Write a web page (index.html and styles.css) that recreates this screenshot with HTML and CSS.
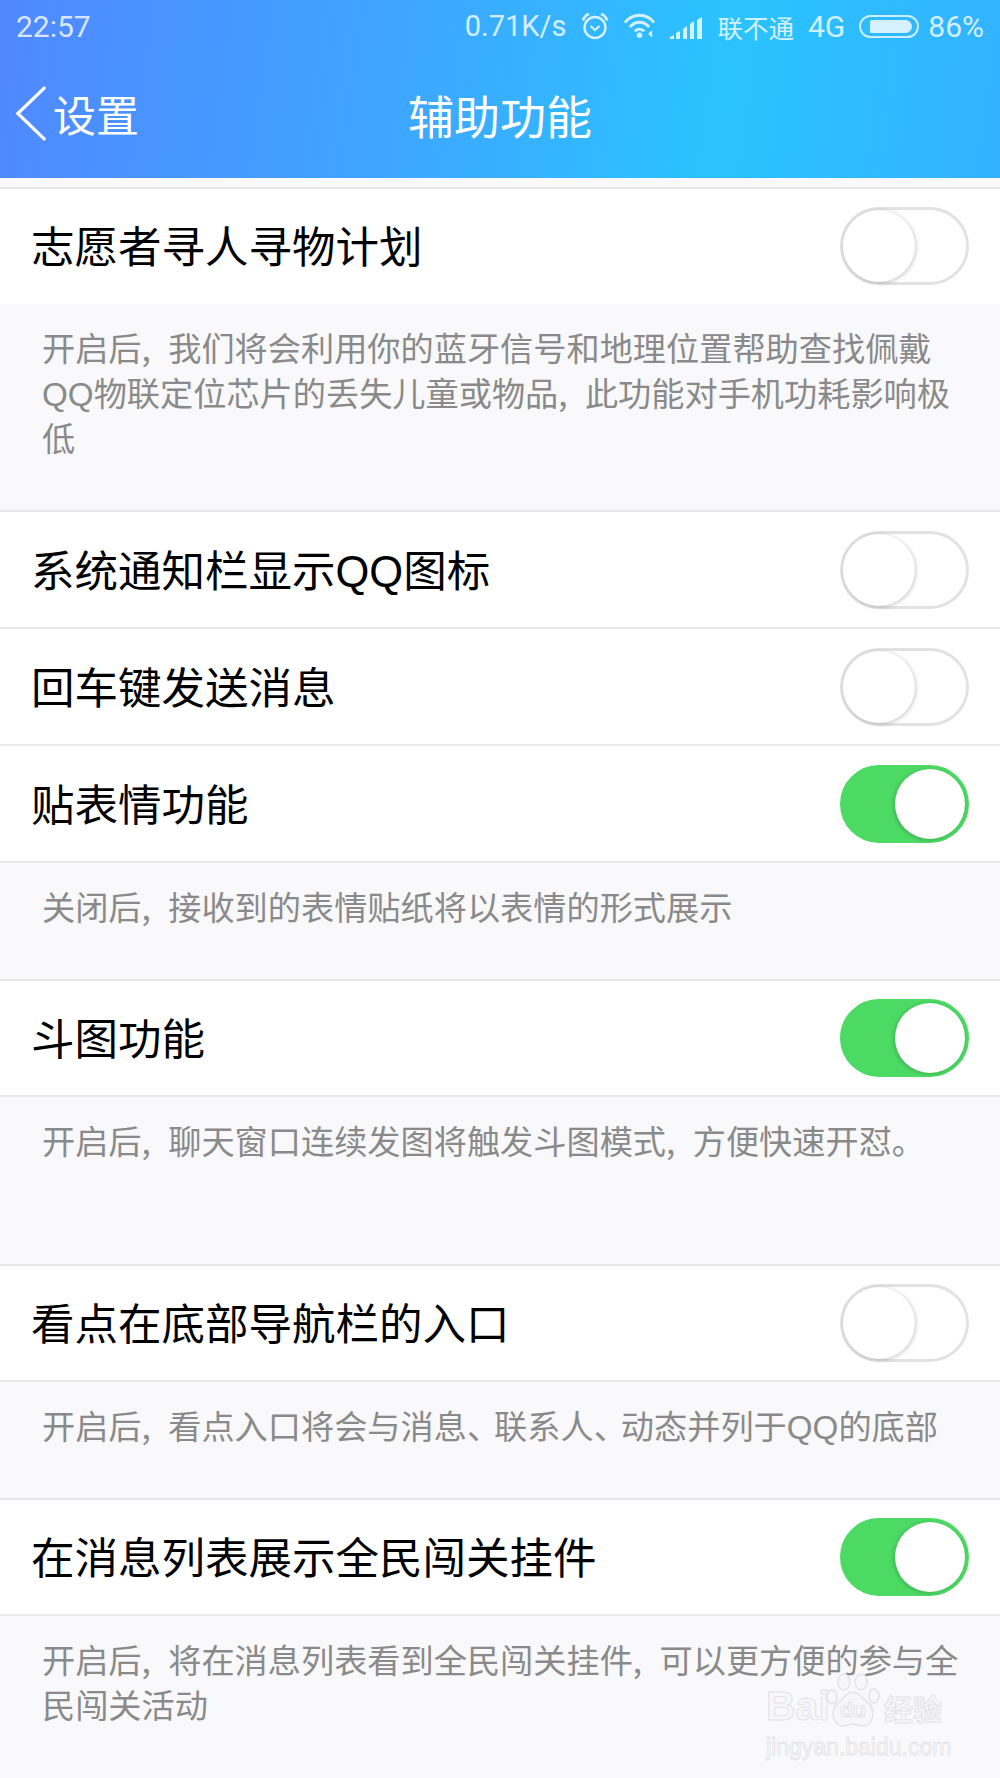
FILE: index.html
```html
<!DOCTYPE html>
<html lang="zh-CN">
<head>
  <meta charset="UTF-8" />
  <meta name="viewport" content="width=device-width, initial-scale=1.0" />
  <title>辅助功能</title>
  <link rel="stylesheet" href="styles.css">
</head>
<body>
  <div class="phone">
    <header class="header">
      <div class="statusbar">
        <span class="time">22:57</span>
        <div class="status-right">
          <span>0.71K/s</span>
          <svg class="ic-alarm" width="28" height="28" viewBox="0 0 28 28" fill="none" stroke="currentColor">
            <circle cx="14" cy="15.5" r="10.5" stroke-width="2.4"/>
            <path d="M9.5 14l4.5 4 4.5-4" stroke-width="2.2"/>
            <path d="M2 8.5C3 5 5 3 8 2M26 8.5C25 5 23 3 20 2" stroke-width="2.6"/>
          </svg>
          <svg class="ic-wifi" width="33" height="26" viewBox="0 0 34 26" fill="none" stroke="currentColor" stroke-width="3">
            <path d="M2 9.5C10-.5 24-.5 32 9.5"/>
            <path d="M7 14c6-6.500 14-6.500 20 0"/>
            <path d="M12 18.500c3-3 7-3 10 0"/>
            <circle cx="17" cy="22.500" r="2.800" fill="currentColor" stroke="none"/>
            <path d="M30 17v8l-4-4z" fill="currentColor" stroke="none"/>
          </svg>
          <svg class="ic-signal" width="32" height="22" viewBox="0 0 32 22" fill="currentColor">
            <path d="M0 22v-2l4-2v4z"/>
            <path d="M6 22v-6l4-2v8z"/>
            <path d="M13 22V12l4-3v13z"/>
            <path d="M20 22V7l4-3v18z"/>
            <path d="M27 22V3l5-3v22z"/>
          </svg>
          <span class="carrier">联不通</span>
          <span class="net">4G</span>
          <span class="battery"><span class="battery-fill"></span></span>
          <span class="pct">86%</span>
        </div>
      </div>
      <div class="navbar">
        <div class="back">
          <svg width="32" height="55" viewBox="0 0 34 58" fill="none" stroke="#fff" stroke-width="3.500" stroke-linecap="round">
            <path d="M31 2L3 29l28 27"/>
          </svg>
          <span>设置</span>
        </div>
        <h1 class="title">辅助功能</h1>
      </div>
    </header>

    <main class="content">
      <section class="group">
        <div class="row row-plain">
          <span>志愿者寻人寻物计划</span>
          <span class="switch"><span class="knob"></span></span>
        </div>
        <p class="desc">开启后, 我们将会利用你的蓝牙信号和地理位置帮助查找佩戴<span class="qq">QQ</span>物联定位芯片的丢失儿童或物品, 此功能对手机功耗影响极低</p>
      </section>

      <section class="group group-stack">
        <div class="row">
          <span>系统通知栏显示<span class="qq">QQ</span>图标</span>
          <span class="switch"><span class="knob"></span></span>
        </div>
        <div class="row">
          <span>回车键发送消息</span>
          <span class="switch"><span class="knob"></span></span>
        </div>
        <div class="row">
          <span>贴表情功能</span>
          <span class="switch on"><span class="knob"></span></span>
        </div>
        <p class="desc">关闭后, 接收到的表情贴纸将以表情的形式展示</p>
      </section>

      <section class="group">
        <div class="row">
          <span>斗图功能</span>
          <span class="switch on"><span class="knob"></span></span>
        </div>
        <p class="desc desc-tall">开启后, 聊天窗口连续发图将触发斗图模式, 方便快速开怼。</p>
      </section>

      <section class="group">
        <div class="row">
          <span>看点在底部导航栏的入口</span>
          <span class="switch"><span class="knob"></span></span>
        </div>
        <p class="desc">开启后, 看点入口将会与消息<span class="dun">、</span>联系人<span class="dun">、</span>动态并列于<span class="qq">QQ</span>的底部</p>
      </section>

      <section class="group">
        <div class="row">
          <span>在消息列表展示全民闯关挂件</span>
          <span class="switch on"><span class="knob"></span></span>
        </div>
        <p class="desc">开启后, 将在消息列表看到全民闯关挂件, 可以更方便的参与全民闯关活动</p>
      </section>
    </main>

    <div class="watermark">
      <div class="wm-top">
        <span class="wm-bai">Bai</span>
        <span class="wm-paw">
          <svg width="54" height="55" viewBox="0 0 54 55" fill="#f7f7f9" stroke="#e4e4e6" stroke-width="1.500">
            <ellipse cx="6" cy="24" rx="5" ry="7"/>
            <ellipse cx="18" cy="9" rx="6" ry="8"/>
            <ellipse cx="35" cy="9" rx="6" ry="8"/>
            <ellipse cx="48" cy="23" rx="5" ry="7"/>
            <path d="M27 19c7 0 9 7 15 11 8 5 6 23-5 23-4 0-7-2-10-2s-6 2-10 2C6 53 4 35 12 30c6-4 8-11 15-11z"/>
          </svg>
          <span class="wm-du">du</span>
        </span>
        <span class="wm-cn">经验</span>
      </div>
      <div class="wm-url">jingyan.baidu.com</div>
    </div>
  </div>
</body>
</html>
```

FILE: styles.css
```css
* {
  box-sizing: border-box;
}

body {
  margin: 0;
  padding: 0;
  font-family: "Noto Sans CJK SC", "Noto Sans", sans-serif;
  background: #f9f9fb;
}

.phone {
  position: relative;
  width: 1000px;
  height: 1778px;
  overflow: hidden;
  background: #f9f9fb;
}

/* header */
.header {
  height: 178px;
  color: #fff;
  background: linear-gradient(98deg, #5088ff 0%, #3fa4ff 38%, #2ac3ff 72%, #33b2ff 100%);
}

.statusbar {
  display: flex;
  justify-content: space-between;
  align-items: center;
  height: 52px;
  padding: 0 16px;
  font-family: Roboto, sans-serif;
  font-size: 29px;
  color: rgba(255, 255, 255, 0.8);
}

.statusbar .time {
  font-size: 30px;
}

.status-right {
  display: flex;
  align-items: center;
}

.ic-alarm {
  margin-left: 15px;
}

.ic-wifi {
  margin-left: 14px;
}

.ic-signal {
  margin-left: 14px;
  margin-top: 4px;
}

.carrier {
  margin-left: 15px;
  font-family: "Noto Sans CJK SC", sans-serif;
  font-size: 25.5px;
}

.net {
  margin-left: 14px;
  font-size: 30px;
}

.battery {
  display: flex;
  width: 60px;
  height: 23px;
  margin-left: 14px;
  padding: 3px;
  border: 2px solid rgba(255, 255, 255, 0.75);
  border-radius: 12px;
}

.battery-fill {
  width: 84%;
  margin-left: 6px;
  border-radius: 2px 8px 8px 2px;
  background: rgba(255, 255, 255, 0.8);
}

.pct {
  margin-left: 9px;
  font-size: 30px;
}

.navbar {
  position: relative;
  display: flex;
  justify-content: center;
  align-items: center;
  height: 124px;
}

.back {
  position: absolute;
  left: 15px;
  top: 30px;
  display: flex;
  align-items: center;
  gap: 6px;
  font-size: 43px;
}

.title {
  margin: 0;
  font-size: 46px;
  font-weight: normal;
}

/* list */
.content {
  padding-top: 9px;
}

.group {
  border-top: 2px solid #e6e6e8;
}

.row {
  display: flex;
  justify-content: space-between;
  align-items: center;
  height: 116px;
  padding: 0 31px 3px 31px;
  font-size: 43.5px;
  color: #000;
  background: #fff;
  border-bottom: 2px solid #e9e9ec;
}

.group-stack .row {
  height: 117px;
}

.row-plain {
  height: 115px;
  padding-bottom: 5px;
  border-bottom: none;
}

.qq {
  font-family: "Liberation Sans", sans-serif;
  line-height: 1;
}

.desc {
  margin: 0;
  padding: 20px 32px 51px 42px;
  font-size: 33.2px;
  line-height: 45px;
  word-spacing: 10px;
  color: #8a8a8a;
}

.dun {
  letter-spacing: -6px;
}

.desc-tall {
  padding-bottom: 102px;
}

/* switches */
.switch {
  display: flex;
  align-items: center;
  flex-shrink: 0;
  width: 129px;
  height: 78px;
  margin-top: 3px;
  border: 3px solid #e2e2e2;
  border-radius: 39px;
  background: #fff;
}

.knob {
  width: 72px;
  height: 72px;
  border-radius: 50%;
  background: #fff;
  box-shadow: 1px 1px 4px rgba(0, 0, 0, 0.22);
}

.switch.on {
  justify-content: flex-end;
  border-color: #4cd964;
  background: #4cd964;
}

.switch.on .knob {
  width: 70px;
  height: 70px;
  margin-right: 1px;
  box-shadow: -1px 1px 4px rgba(0, 0, 0, 0.2);
}

/* watermark */
.watermark {
  position: absolute;
  left: 766px;
  top: 1673px;
  width: 182px;
  color: #f7f7f9;
}

.wm-top {
  display: flex;
  align-items: flex-end;
  height: 55px;
  -webkit-text-stroke: 1px #e4e4e6;
}

.wm-bai {
  width: 60px;
  font-family: "Liberation Sans", sans-serif;
  font-size: 41px;
  font-weight: bold;
  line-height: 44px;
}

.wm-paw {
  position: relative;
  width: 54px;
  height: 55px;
}

.wm-du {
  position: absolute;
  left: 14px;
  top: 25px;
  font-family: "Liberation Sans", sans-serif;
  font-size: 21px;
  font-weight: bold;
  line-height: 24px;
}

.wm-cn {
  margin-left: 4px;
  font-size: 29px;
  line-height: 40px;
  font-weight: bold;
}

.wm-url {
  margin-top: 6px;
  font-family: "Liberation Sans", sans-serif;
  font-size: 23px;
  line-height: 26px;
  -webkit-text-stroke: 0.8px #e4e4e6;
}
```
